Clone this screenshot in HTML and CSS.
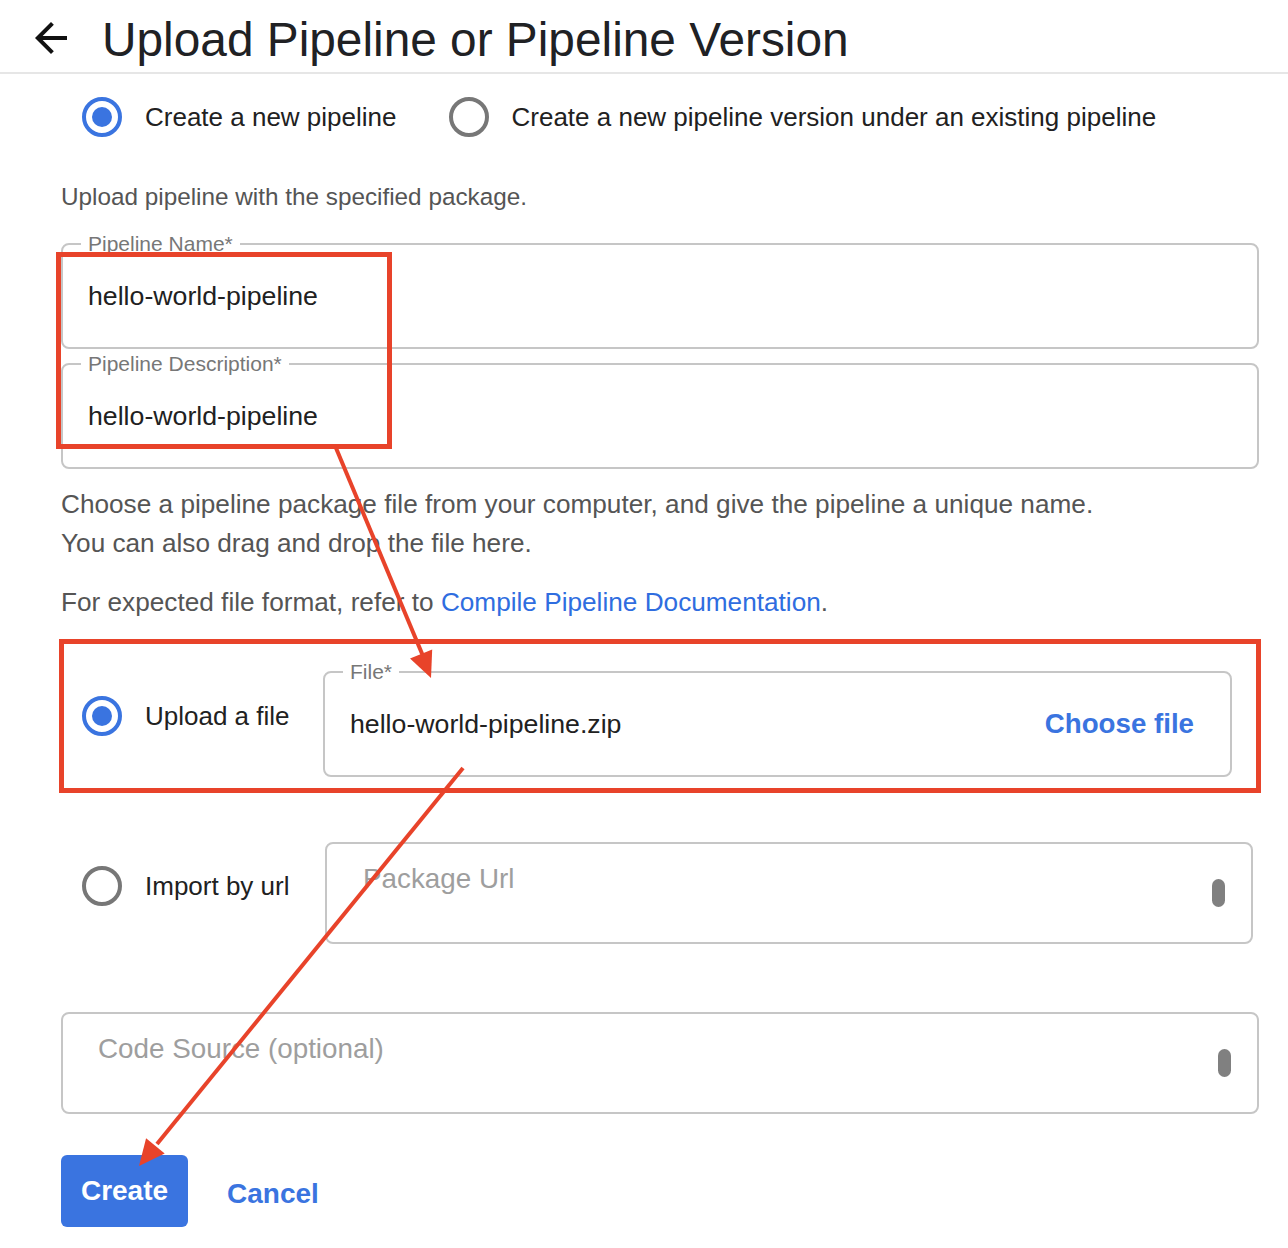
FILE: index.html
```html
<!DOCTYPE html>
<html lang="en">
<head>
<meta charset="utf-8">
<title>Upload Pipeline or Pipeline Version</title>
<link rel="stylesheet" href="styles.css">
</head>
<body>
  <header class="topbar">
    <svg class="back" viewBox="0 0 24 24" aria-hidden="true"><path d="M20 11H7.83l5.59-5.59L12 4l-8 8 8 8 1.41-1.41L7.83 13H20v-2z"/></svg>
    <h1 class="title">Upload Pipeline or Pipeline Version</h1>
  </header>

  <main class="content">
    <div class="mode-row">
      <label class="option"><span class="radio checked"></span><span class="option-label">Create a new pipeline</span></label>
      <label class="option option-second"><span class="radio"></span><span class="option-label">Create a new pipeline version under an existing pipeline</span></label>
    </div>

    <p class="hint">Upload pipeline with the specified package.</p>

    <fieldset class="field">
      <legend>Pipeline Name*</legend>
      <div class="value">hello-world-pipeline</div>
    </fieldset>

    <fieldset class="field field-desc">
      <legend>Pipeline Description*</legend>
      <div class="value">hello-world-pipeline</div>
    </fieldset>

    <p class="info">Choose a pipeline package file from your computer, and give the pipeline a unique name.<br>You can also drag and drop the file here.</p>
    <p class="info info-format">For expected file format, refer to <a class="doc-link" href="#">Compile Pipeline Documentation</a>.</p>

    <div class="source-row upload-row">
      <label class="option source-option"><span class="radio checked"></span><span class="option-label">Upload a file</span></label>
      <fieldset class="field file-field">
        <legend>File*</legend>
        <div class="value file-value"><span>hello-world-pipeline.zip</span><button class="choose" type="button">Choose file</button></div>
      </fieldset>
    </div>

    <div class="source-row url-row">
      <label class="option source-option"><span class="radio"></span><span class="option-label">Import by url</span></label>
      <div class="box url-box"><span class="placeholder">Package Url</span><span class="handle"></span></div>
    </div>

    <div class="box code-box"><span class="placeholder">Code Source (optional)</span><span class="handle"></span></div>

    <div class="actions">
      <button class="btn-primary" type="button">Create</button>
      <button class="btn-link" type="button">Cancel</button>
    </div>
  </main>

  <div class="annotations" aria-hidden="true">
    <div class="mark mark-fields"></div>
    <div class="mark mark-upload"></div>
    <svg class="arrows" viewBox="0 0 1288 1248" width="1288" height="1248">
      <line x1="336" y1="448" x2="423" y2="656" />
      <polygon points="431,678 410,658.6 432.2,649.4" />
      <line x1="463" y1="768" x2="157" y2="1144" />
      <polygon points="139,1166 146.1,1138.2 164.7,1153.4" />
    </svg>
  </div>
</body>
</html>
```

FILE: styles.css
```css
* { box-sizing: border-box; }

html, body { margin: 0; padding: 0; }

body {
  position: relative;
  width: 1288px;
  min-height: 1248px;
  font-family: "Liberation Sans", Arial, Helvetica, sans-serif;
  color: #212121;
  background: #ffffff;
}

/* Header */
.topbar {
  display: flex;
  align-items: center;
  height: 74px;
  padding-left: 27px;
  border-bottom: 2px solid #e6e6e6;
}
.back {
  width: 48px;
  height: 48px;
  margin-top: 4px;
  fill: #111111;
  flex: none;
}
.title {
  margin: 7px 0 0 27px;
  font-size: 47.8px;
  font-weight: 400;
  line-height: 56px;
  color: #202124;
}

/* Content */
.content {
  padding: 0 29px 0 61px;
}

.mode-row {
  display: flex;
  align-items: center;
  margin-top: 23px;
  padding-left: 21px;
  height: 40px;
}
.option {
  display: flex;
  align-items: center;
  gap: 23px;
  font-size: 26px;
  line-height: 30px;
  color: #212121;
}
.option-second { margin-left: 52px; }

.radio {
  flex: none;
  width: 40px;
  height: 40px;
  border-radius: 50%;
  border: 4px solid #777777;
  display: grid;
  place-items: center;
}
.radio.checked { border-color: #3a74e0; }
.radio.checked::after {
  content: "";
  width: 20px;
  height: 20px;
  border-radius: 50%;
  background: #3a74e0;
}

.hint {
  margin: 46px 0 0;
  font-size: 24.3px;
  line-height: 28px;
  color: #555555;
}

/* Outlined fields */
.field {
  margin: 22px 0 0;
  padding: 0 18px;
  border: 2px solid #c6c6c6;
  border-radius: 8px;
  min-width: 0;
}
.field legend {
  padding: 0 7px;
  font-size: 21px;
  line-height: 22px;
  color: #777777;
}
.field-desc { margin-top: 4px; }
.value {
  padding: 26px 7px 36px;
  font-size: 26.7px;
  line-height: 30px;
  color: #212121;
}

.info {
  margin: 16px 0 0;
  font-size: 26.2px;
  line-height: 39px;
  color: #555555;
}
.info-format { margin-top: 20px; }
.doc-link {
  color: #2f6de0;
  text-decoration: none;
}

/* Source rows */
.source-row {
  display: flex;
  align-items: center;
}
.source-option {
  flex: 0 0 262px;
  padding-left: 21px;
}
.upload-row { margin-top: 39px; }
.upload-row .source-option { margin-bottom: 6px; }
.file-field {
  flex: 1;
  margin: 0 27px 0 0;
  padding-right: 29px;
}
.file-value {
  display: flex;
  align-items: center;
  justify-content: space-between;
}
.choose {
  border: 0;
  padding: 0;
  background: none;
  font-family: inherit;
  font-size: 27.7px;
  font-weight: 700;
  line-height: 30px;
  color: #3a74e0;
}

.url-row { margin-top: 65px; }
.url-row .source-option { margin-bottom: 14px; }

.box {
  display: flex;
  justify-content: space-between;
  height: 102px;
  border: 2px solid #c6c6c6;
  border-radius: 8px;
}
.url-box {
  flex: 1;
  margin: 0 6px 0 2px;
  padding: 20px 26px 0 36px;
}
.code-box {
  margin-top: 68px;
  padding: 20px 26px 0 35px;
}
.placeholder {
  font-size: 27.8px;
  line-height: 30px;
  color: #9e9e9e;
}
.handle {
  align-self: center;
  width: 13px;
  height: 28px;
  margin-top: -20px;
  border-radius: 7px;
  background: #808080;
}

/* Actions */
.actions {
  display: flex;
  align-items: center;
  gap: 39px;
  margin-top: 41px;
}
.btn-primary {
  width: 127px;
  height: 72px;
  border: 0;
  border-radius: 6px;
  background: #3a74e0;
  color: #ffffff;
  font-family: inherit;
  font-size: 28px;
  font-weight: 700;
}
.btn-link {
  border: 0;
  padding: 0;
  margin-top: 5px;
  background: none;
  color: #3a74e0;
  font-family: inherit;
  font-size: 28px;
  font-weight: 700;
}

/* Annotation overlay */
.annotations {
  position: absolute;
  inset: 0;
  pointer-events: none;
}
.mark {
  position: absolute;
  border: 5px solid #e8432a;
}
.mark-fields {
  left: 56px;
  top: 252px;
  width: 336px;
  height: 197px;
}
.mark-upload {
  left: 59px;
  top: 639px;
  width: 1202px;
  height: 154px;
}
.arrows {
  position: absolute;
  left: 0;
  top: 0;
}
.arrows line {
  stroke: #e8432a;
  stroke-width: 4;
}
.arrows polygon {
  fill: #e8432a;
}
```
